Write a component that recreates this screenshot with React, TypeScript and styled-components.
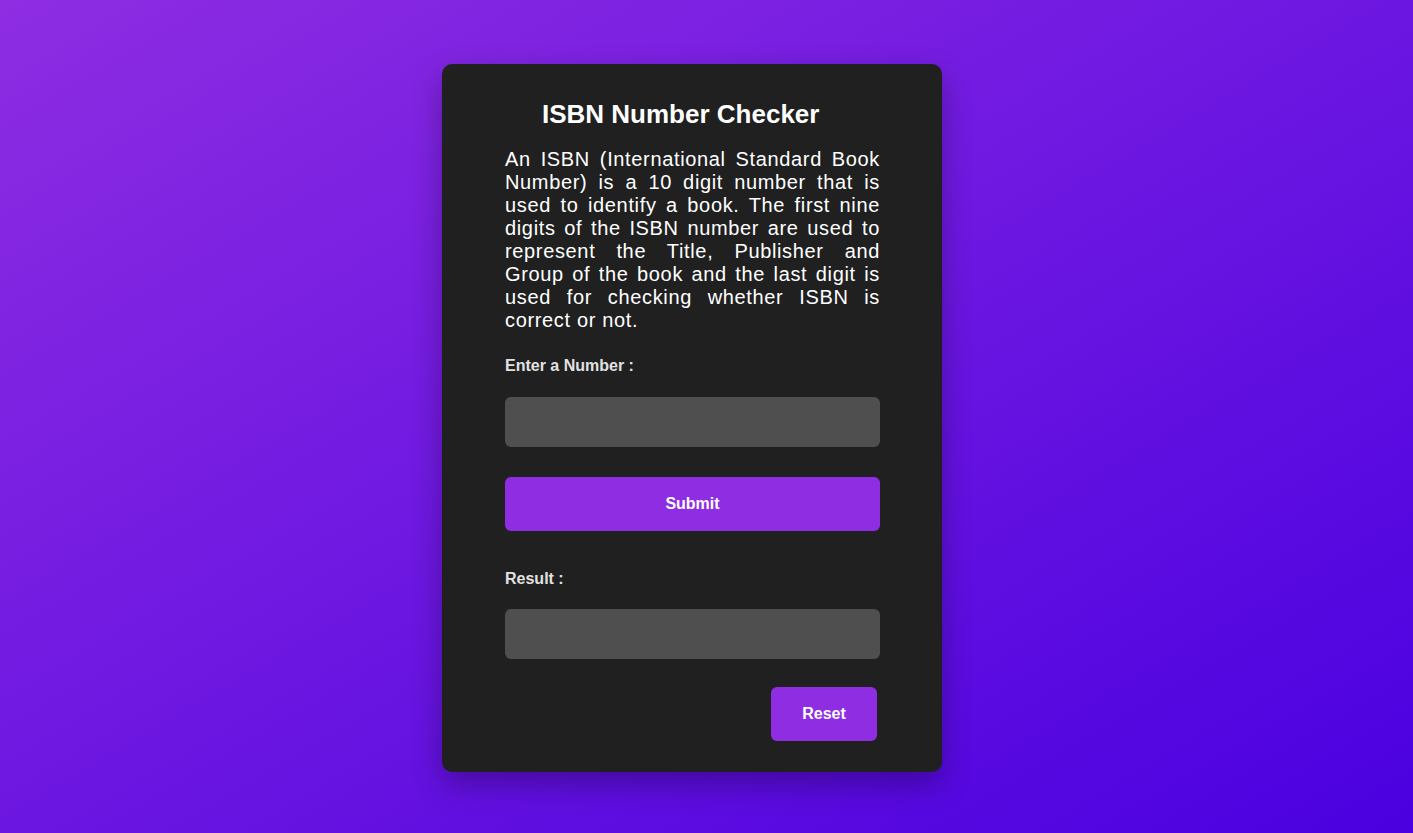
import React, { useState } from "react";
import styled, { createGlobalStyle } from "styled-components";

const Global = createGlobalStyle`
  * { box-sizing: border-box; }
  html, body { margin: 0; padding: 0; }
  body {
    min-height: 100vh;
    background: linear-gradient(to bottom right, #8e2de2, #4a00e0);
    font-family: "Liberation Sans", Arial, sans-serif;
  }
`;

const Page = styled.div`
  min-height: 100vh;
  display: flex;
  justify-content: center;
  align-items: flex-start;
  padding: 64px 29px 0 0;
`;

const Card = styled.div`
  width: 500px;
  background: #202020;
  border-radius: 10px;
  box-shadow: 0 12px 30px rgba(0, 0, 0, 0.3);
  padding: 35px 62px 31px 63px;
  display: flex;
  flex-direction: column;
  color: #fff;
`;

const Title = styled.h2`
  margin: 0 0 18px;
  padding-left: 37px;
  font-size: 26px;
  font-weight: 700;
  color: #fff;
`;

const Description = styled.p`
  margin: 0 0 25px;
  font-size: 20px;
  line-height: 23px;
  letter-spacing: 0.65px;
  text-align: justify;
  color: #fff;
`;

const Label = styled.label`
  display: block;
  font-size: 16px;
  font-weight: 700;
  color: #e2e2e2;
`;

const Field = styled.input<{ $gap: number }>`
  display: block;
  width: 100%;
  height: 50px;
  margin-top: ${(p) => p.$gap}px;
  border: none;
  outline: none;
  border-radius: 6px;
  background: #4f4f4f;
  color: #fff;
  font-size: 18px;
  font-family: inherit;
  padding: 0 14px;
`;

const Button = styled.button<{ $full?: boolean }>`
  display: block;
  height: 54px;
  width: ${(p) => (p.$full ? "100%" : "106px")};
  border: none;
  border-radius: 6px;
  background: #8e2de2;
  color: #fff;
  font-family: inherit;
  font-size: 16px;
  font-weight: 700;
  cursor: pointer;
`;

const SubmitRow = styled.div`
  margin-top: 30px;
  margin-bottom: 39px;
`;

const ResetRow = styled.div`
  display: flex;
  justify-content: flex-end;
  margin-top: 28px;
  padding-right: 3px;
`;

export default function App() {
  const [value, setValue] = useState("");
  const [result, setResult] = useState("");

  const check = () => {
    const s = value.trim();
    if (!/^\d{9}[\dXx]$/.test(s)) {
      setResult("Invalid ISBN");
      return;
    }
    let sum = 0;
    for (let i = 0; i < 10; i++) {
      const c = s[i];
      const d = c === "X" || c === "x" ? 10 : Number(c);
      sum += d * (10 - i);
    }
    setResult(sum % 11 === 0 ? "Valid ISBN" : "Invalid ISBN");
  };

  return (
    <>
      <Global />
      <Page>
        <Card>
          <Title>ISBN Number Checker</Title>
          <Description>
            An ISBN (International Standard Book Number) is a 10 digit number
            that is used to identify a book. The first nine digits of the ISBN
            number are used to represent the Title, Publisher and Group of the
            book and the last digit is used for checking whether ISBN is correct
            or not.
          </Description>
          <Label htmlFor="isbn">Enter a Number :</Label>
          <Field
            id="isbn"
            $gap={22}
            value={value}
            onChange={(e) => setValue(e.target.value)}
          />
          <SubmitRow>
            <Button $full onClick={check}>
              Submit
            </Button>
          </SubmitRow>
          <Label htmlFor="result">Result :</Label>
          <Field id="result" $gap={21} value={result} readOnly />
          <ResetRow>
            <Button
              onClick={() => {
                setValue("");
                setResult("");
              }}
            >
              Reset
            </Button>
          </ResetRow>
        </Card>
      </Page>
    </>
  );
}
